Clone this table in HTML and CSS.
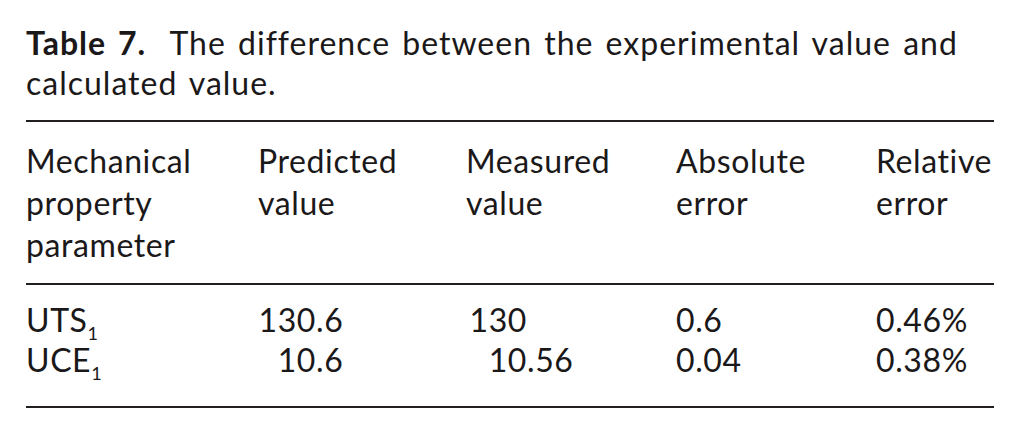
FILE: index.html
```html
<!DOCTYPE html>
<html lang="en">
<head>
<meta charset="utf-8">
<title>Table 7</title>
<link rel="stylesheet" href="styles.css">
</head>
<body>
<div class="page">
  <p class="caption"><span class="label">Table 7.</span>&nbsp; The difference between the experimental value and<br>calculated value.</p>
  <table class="data">
    <colgroup>
      <col class="c1"><col class="c2"><col class="c3"><col class="c4"><col class="c5">
    </colgroup>
    <thead>
      <tr>
        <th>Mechanical<br>property<br>parameter</th>
        <th>Predicted<br>value</th>
        <th>Measured<br>value</th>
        <th>Absolute<br>error</th>
        <th>Relative<br>error</th>
      </tr>
    </thead>
    <tbody>
      <tr class="first">
        <td>UTS<sub>1</sub></td>
        <td><span class="int p">130</span>.6</td>
        <td><span class="int m">130</span></td>
        <td>0.6</td>
        <td>0.46%</td>
      </tr>
      <tr class="last">
        <td>UCE<sub>1</sub></td>
        <td><span class="int p">10</span>.6</td>
        <td><span class="int m">10</span>.56</td>
        <td>0.04</td>
        <td>0.38%</td>
      </tr>
    </tbody>
  </table>
</div>
</body>
</html>
```

FILE: styles.css
```css
html, body {
  margin: 0;
  padding: 0;
  background: #ffffff;
}

body {
  font-family: Lato, "Open Sans", "DejaVu Sans", sans-serif;
  color: #1b1819;
  font-size: 32px;
  letter-spacing: 0.6px;
}

.page {
  padding: 23px 27px 0 26px;
  width: 968px;
}

.caption {
  margin: 0;
  line-height: 40px;
  white-space: nowrap;
  letter-spacing: 1px;
  word-spacing: 3px;
}

.label {
  font-weight: 700;
  letter-spacing: 1px;
}

.data {
  margin-top: 17px;
  width: 968px;
  border-collapse: collapse;
  table-layout: fixed;
}

.c1 { width: 232px; }
.c2 { width: 208px; }
.c3 { width: 210px; }
.c4 { width: 200px; }
.c5 { width: 118px; }

.data th,
.data td {
  padding: 0;
  text-align: left;
  vertical-align: top;
  font-weight: 400;
  white-space: nowrap;
}

.data thead tr {
  border-top: 2px solid #231f20;
  border-bottom: 2px solid #231f20;
}

.data th {
  line-height: 42px;
  padding-top: 18px;
  padding-bottom: 17px;
}

.data td {
  line-height: 40px;
}

.data tr.first td {
  padding-top: 15px;
}

.data tr.last td {
  padding-bottom: 26px;
}

.data tbody tr.last {
  border-bottom: 2px solid #231f20;
}

.int {
  display: inline-block;
  text-align: right;
}

.int.p { width: 58px; }
.int.m { width: 61px; }

sub {
  font-size: 18px;
  line-height: 0;
  vertical-align: -8px;
  letter-spacing: 0;
}
```
